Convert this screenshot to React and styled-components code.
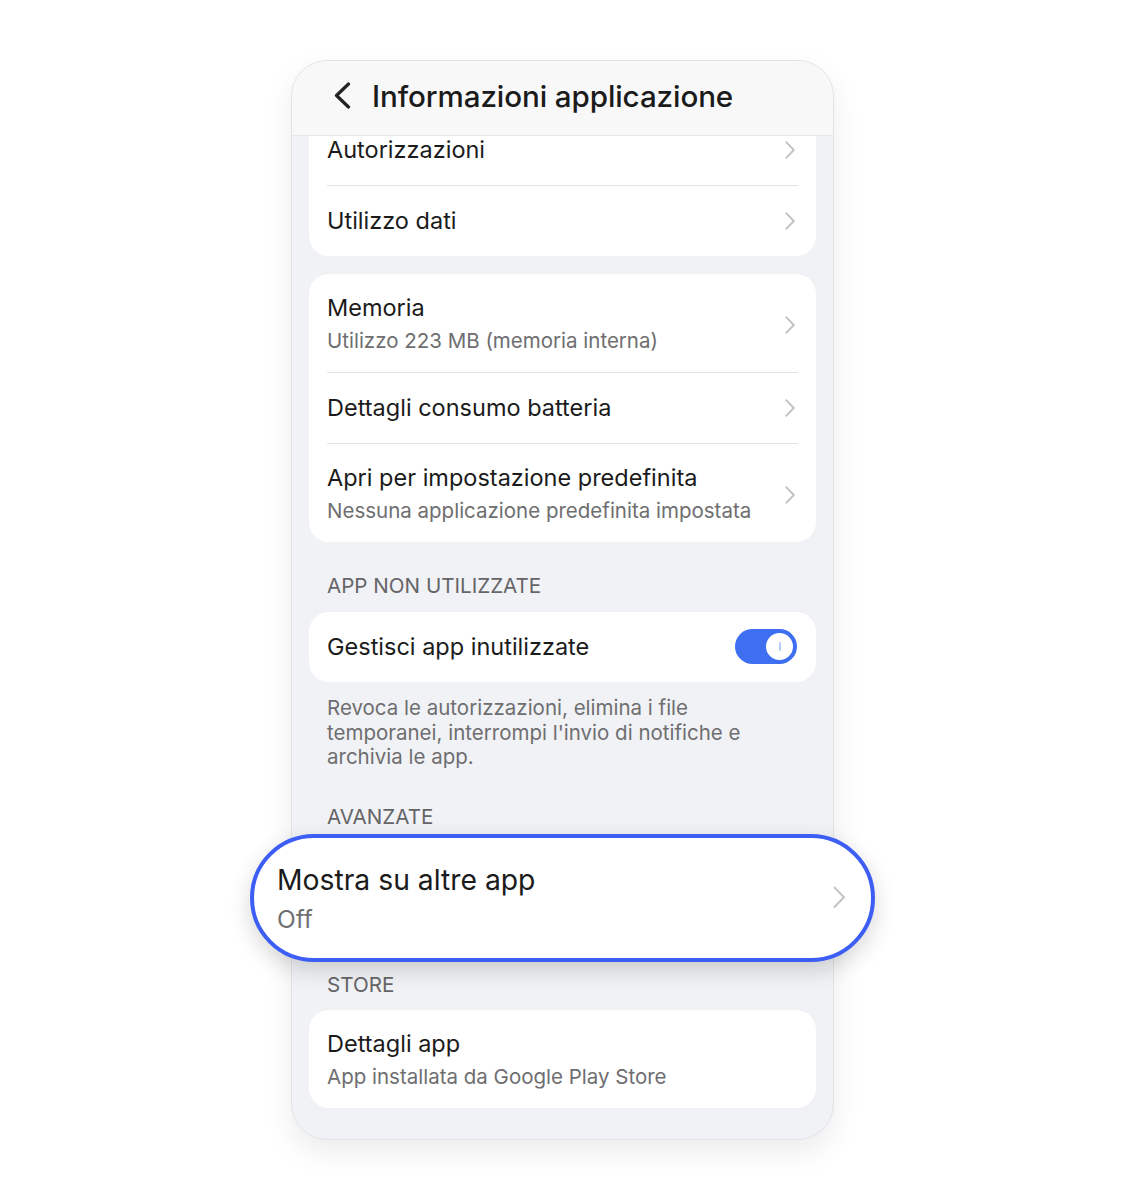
import React from "react";
import styled, { createGlobalStyle } from "styled-components";

const Global = createGlobalStyle`
  body {
    margin: 0;
    background: #ffffff;
    font-family: Inter, "Noto Sans", sans-serif;
    -webkit-font-smoothing: antialiased;
  }
`;

const Page = styled.div`
  display: flex;
  justify-content: center;
  padding: 60px 0 60px;
`;

const Phone = styled.div`
  width: 541px;
  background: #f1f2f6;
  border: 1px solid #e2e3e6;
  border-radius: 36px;
  box-shadow: 0 12px 30px rgba(0, 0, 0, 0.08);
  padding-bottom: 31px;
`;

const Header = styled.div`
  position: relative;
  z-index: 1;
  height: 75px;
  display: flex;
  align-items: center;
  gap: 21px;
  padding: 0 0 5px 42px;
  box-sizing: border-box;
  background: #f8f8f9;
  border-bottom: 1px solid #e6e7ea;
  border-radius: 35px 35px 0 0;
`;

const Title = styled.h1`
  margin: 0;
  font-size: 29.6px;
  font-weight: 500;
  color: #1b1b1b;
  letter-spacing: -0.1px;
`;

const Content = styled.div`
  padding: 0 17px;
  display: flex;
  flex-direction: column;
`;

const Card = styled.div`
  background: #ffffff;
  border-radius: ${(p) => (p.$scrolled ? "0 0 20px 20px" : "20px")};
  margin-top: ${(p) => p.$top || 0}px;
  padding: 0 18px;
`;

const Row = styled.div`
  display: flex;
  align-items: center;
  justify-content: space-between;
  padding: ${(p) => (p.$two ? "19px 3px 16px 0" : "20px 3px 20px 0")};
  border-top: ${(p) => (p.$divider ? "1px solid #e4e4e6" : "none")};
`;

const Texts = styled.div`
  display: flex;
  flex-direction: column;
  gap: 3px;
`;

const Label = styled.div`
  font-size: 23.5px;
  line-height: 30px;
  color: #1b1b1b;
`;

const Sub = styled.div`
  font-size: 20.5px;
  line-height: 30px;
  color: #6e6e70;
`;

const SectionTitle = styled.div`
  font-size: 20.6px;
  line-height: 24px;
  color: #656567;
  padding: 0 18px;
  margin: ${(p) => p.$m};
`;

const Note = styled.div`
  font-size: 20.5px;
  line-height: 24.5px;
  color: #6e6e70;
  padding: 14px 18px 0;
`;

const Toggle = styled.div`
  width: 62px;
  height: 35px;
  margin: -3px -2px -2px 0;
  border-radius: 18px;
  background: #3e6ff0;
  display: flex;
  align-items: center;
  justify-content: flex-end;
  padding-right: 4px;
  box-sizing: border-box;
  flex-shrink: 0;
`;

const Thumb = styled.div`
  width: 27px;
  height: 27px;
  border-radius: 50%;
  background: #ffffff;
  display: flex;
  align-items: center;
  justify-content: center;

  &::after {
    content: "";
    width: 2px;
    height: 9px;
    border-radius: 1px;
    background: #b9ccf8;
  }
`;

const Highlight = styled.div`
  margin: 5px -59px 0;
  height: 128px;
  box-sizing: border-box;
  border: 4px solid #3d5ef5;
  border-radius: 64px;
  background: #ffffff;
  box-shadow: 0 8px 22px rgba(0, 0, 0, 0.16);
  display: flex;
  align-items: center;
  justify-content: space-between;
  padding: 0 26px 0 23px;
  position: relative;
`;

const BigTexts = styled.div`
  display: flex;
  flex-direction: column;
  gap: 3px;
  margin-top: 4px;
`;

const BigLabel = styled.div`
  font-size: 28.3px;
  line-height: 36px;
  color: #1b1b1b;
`;

const BigSub = styled.div`
  font-size: 24.5px;
  line-height: 36px;
  color: #6e6e70;
`;

const Chevron = ({ size = 1 }) => (
  <svg width={10 * size} height={18 * size} viewBox="0 0 10 18" fill="none">
    <path
      d="M1.2 1.2 L8.8 9 L1.2 16.8"
      stroke="#c2c2c4"
      strokeWidth={1.8 / size}
      strokeLinecap="round"
      strokeLinejoin="round"
    />
  </svg>
);

const Back = () => (
  <svg width="17" height="27" viewBox="0 0 17 27" fill="none">
    <path d="M14.5 2 L2.5 13.5 L14.5 25" stroke="#222" strokeWidth="3.2" strokeLinecap="round" strokeLinejoin="round" />
  </svg>
);

const Item = ({ title, sub, divider }) => (
  <Row $two={!!sub} $divider={divider}>
    <Texts>
      <Label>{title}</Label>
      {sub && <Sub>{sub}</Sub>}
    </Texts>
    <Chevron />
  </Row>
);

const App = () => {
  return (
    <Page>
      <Global />
      <Phone>
        <Header>
          <Back />
          <Title>Informazioni applicazione</Title>
        </Header>
        <Content>
          <Card $scrolled $top={-21}>
            <Item title="Autorizzazioni" />
            <Item title="Utilizzo dati" divider />
          </Card>
          <Card $top={18}>
            <Item title="Memoria" sub="Utilizzo 223 MB (memoria interna)" />
            <Item title="Dettagli consumo batteria" divider />
            <Item
              title="Apri per impostazione predefinita"
              sub="Nessuna applicazione predefinita impostata"
              divider
            />
          </Card>
          <SectionTitle $m="32px 0 14px">APP NON UTILIZZATE</SectionTitle>
          <Card>
            <Row>
              <Label>Gestisci app inutilizzate</Label>
              <Toggle>
                <Thumb />
              </Toggle>
            </Row>
          </Card>
          <Note>
            Revoca le autorizzazioni, elimina i file temporanei, interrompi l'invio di notifiche e
            archivia le app.
          </Note>
          <SectionTitle $m="35px 0 0">AVANZATE</SectionTitle>
          <Highlight>
            <BigTexts>
              <BigLabel>Mostra su altre app</BigLabel>
              <BigSub>Off</BigSub>
            </BigTexts>
            <Chevron size={1.25} />
          </Highlight>
          <SectionTitle $m="11px 0 13px">STORE</SectionTitle>
          <Card>
            <Row $two>
              <Texts>
                <Label>Dettagli app</Label>
                <Sub>App installata da Google Play Store</Sub>
              </Texts>
            </Row>
          </Card>
        </Content>
      </Phone>
    </Page>
  );
};

export default App;
